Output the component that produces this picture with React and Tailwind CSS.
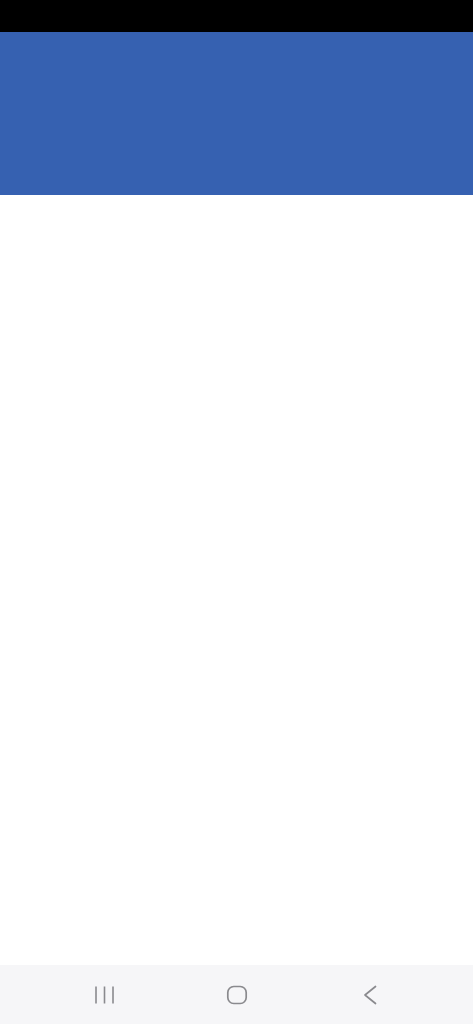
import React from "react";

const NavBar = () => (
  <div className="h-[59px] bg-[#f6f6f8] flex items-center justify-center gap-[111px]">
    {/* Recents */}
    <svg width="22" height="20" viewBox="0 0 22 20" className="text-[#8a8a8e]">
      <path d="M3 1.5v17M11.5 1.5v17M20 1.5v17" stroke="currentColor" strokeWidth="1.6" fill="none" />
    </svg>
    {/* Home */}
    <svg width="22" height="20" viewBox="0 0 22 20" className="text-[#8a8a8e]">
      <rect x="1.8" y="1.5" width="18.4" height="17" rx="6" stroke="currentColor" strokeWidth="1.7" fill="none" />
    </svg>
    {/* Back */}
    <svg width="22" height="20" viewBox="0 0 22 20" className="text-[#8a8a8e]">
      <path d="M16.5 1.5L6 10l10.5 8.5" stroke="currentColor" strokeWidth="1.7" fill="none" strokeLinecap="round" strokeLinejoin="round" />
    </svg>
  </div>
);

const App = () => {
  return (
    <div className="w-full h-[1024px] flex flex-col bg-white font-['Roboto',sans-serif]">
      {/* Status bar */}
      <div className="h-[32px] bg-black" />
      {/* App header */}
      <div className="h-[163px] bg-[#3661b1]" />
      {/* Content */}
      <div className="flex-1 bg-white" />
      <NavBar />
    </div>
  );
};

export default App;
